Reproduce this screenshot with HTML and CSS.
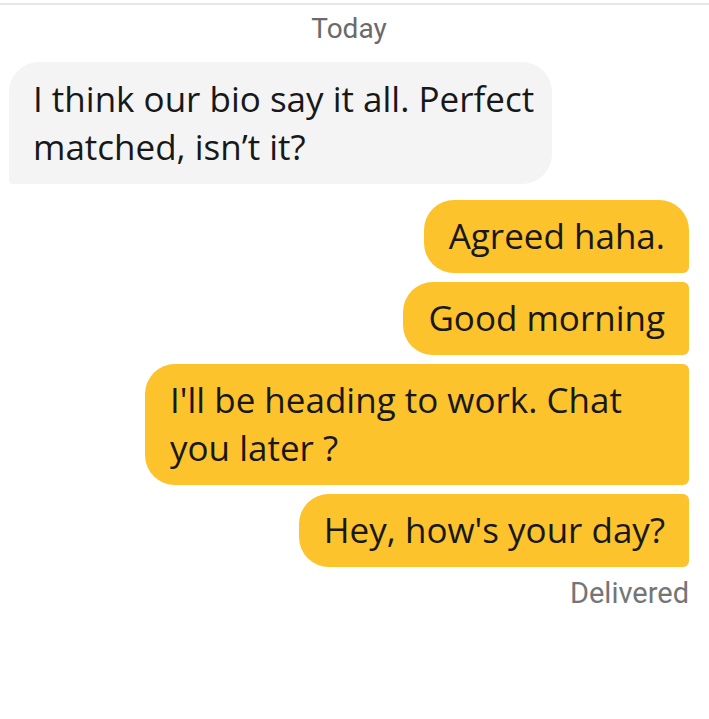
FILE: index.html
```html
<!DOCTYPE html>
<html lang="en">
<head>
    <meta charset="UTF-8">
    <meta name="viewport" content="width=device-width, initial-scale=1.0">
    <title>Chat</title>
    <link rel="stylesheet" href="styles.css">
</head>
<body>
    <div class="chat">
        <div class="day">Today</div>

        <div class="messages">
            <div class="bubble incoming">I think our bio say it all. Perfect matched, isn’t it?</div>

            <div class="bubble outgoing first">Agreed haha.</div>
            <div class="bubble outgoing">Good morning</div>
            <div class="bubble outgoing">I'll be heading to work. Chat you later ?</div>
            <div class="bubble outgoing">Hey, how's your day?</div>

            <div class="status">Delivered</div>
        </div>
    </div>
</body>
</html>
```

FILE: styles.css
```css
body {
    margin: 0;
    padding: 0;
    background-color: #ffffff;
    font-family: "Open Sans", "Noto Sans", sans-serif;
    color: #181818;
}

.chat {
    border-top: 2px solid #e6e6e6;
    margin-top: 3px;
}

.day {
    font-family: Roboto, "Liberation Sans", sans-serif;
    font-size: 28px;
    color: #6a6a6a;
    text-align: center;
    padding: 8px 11px 0 0;
    line-height: 32px;
}

.messages {
    display: flex;
    flex-direction: column;
    gap: 9px;
    padding: 0 20px 0 9px;
    margin-top: 17px;
}

.bubble {
    font-size: 35px;
    line-height: 48px;
    padding: 12px 24px 13px 25px;
    max-width: 495px;
    width: fit-content;
}

/* the wider box keeps "Perfect" on the first line */
.incoming {
    align-self: flex-start;
    background-color: #f4f4f4;
    border-radius: 30px 30px 30px 4px;
    padding: 13px 4px 13px 24px;
    max-width: 515px;
    margin-bottom: 7px;
}

.outgoing {
    align-self: flex-end;
    background-color: #fcc32c;
    border-radius: 30px 6px 6px 30px;
}

.outgoing.first {
    border-top-right-radius: 30px;
}

.status {
    align-self: flex-end;
    font-family: Roboto, "Liberation Sans", sans-serif;
    font-size: 29px;
    color: #757575;
    margin-top: 0;
}
```
